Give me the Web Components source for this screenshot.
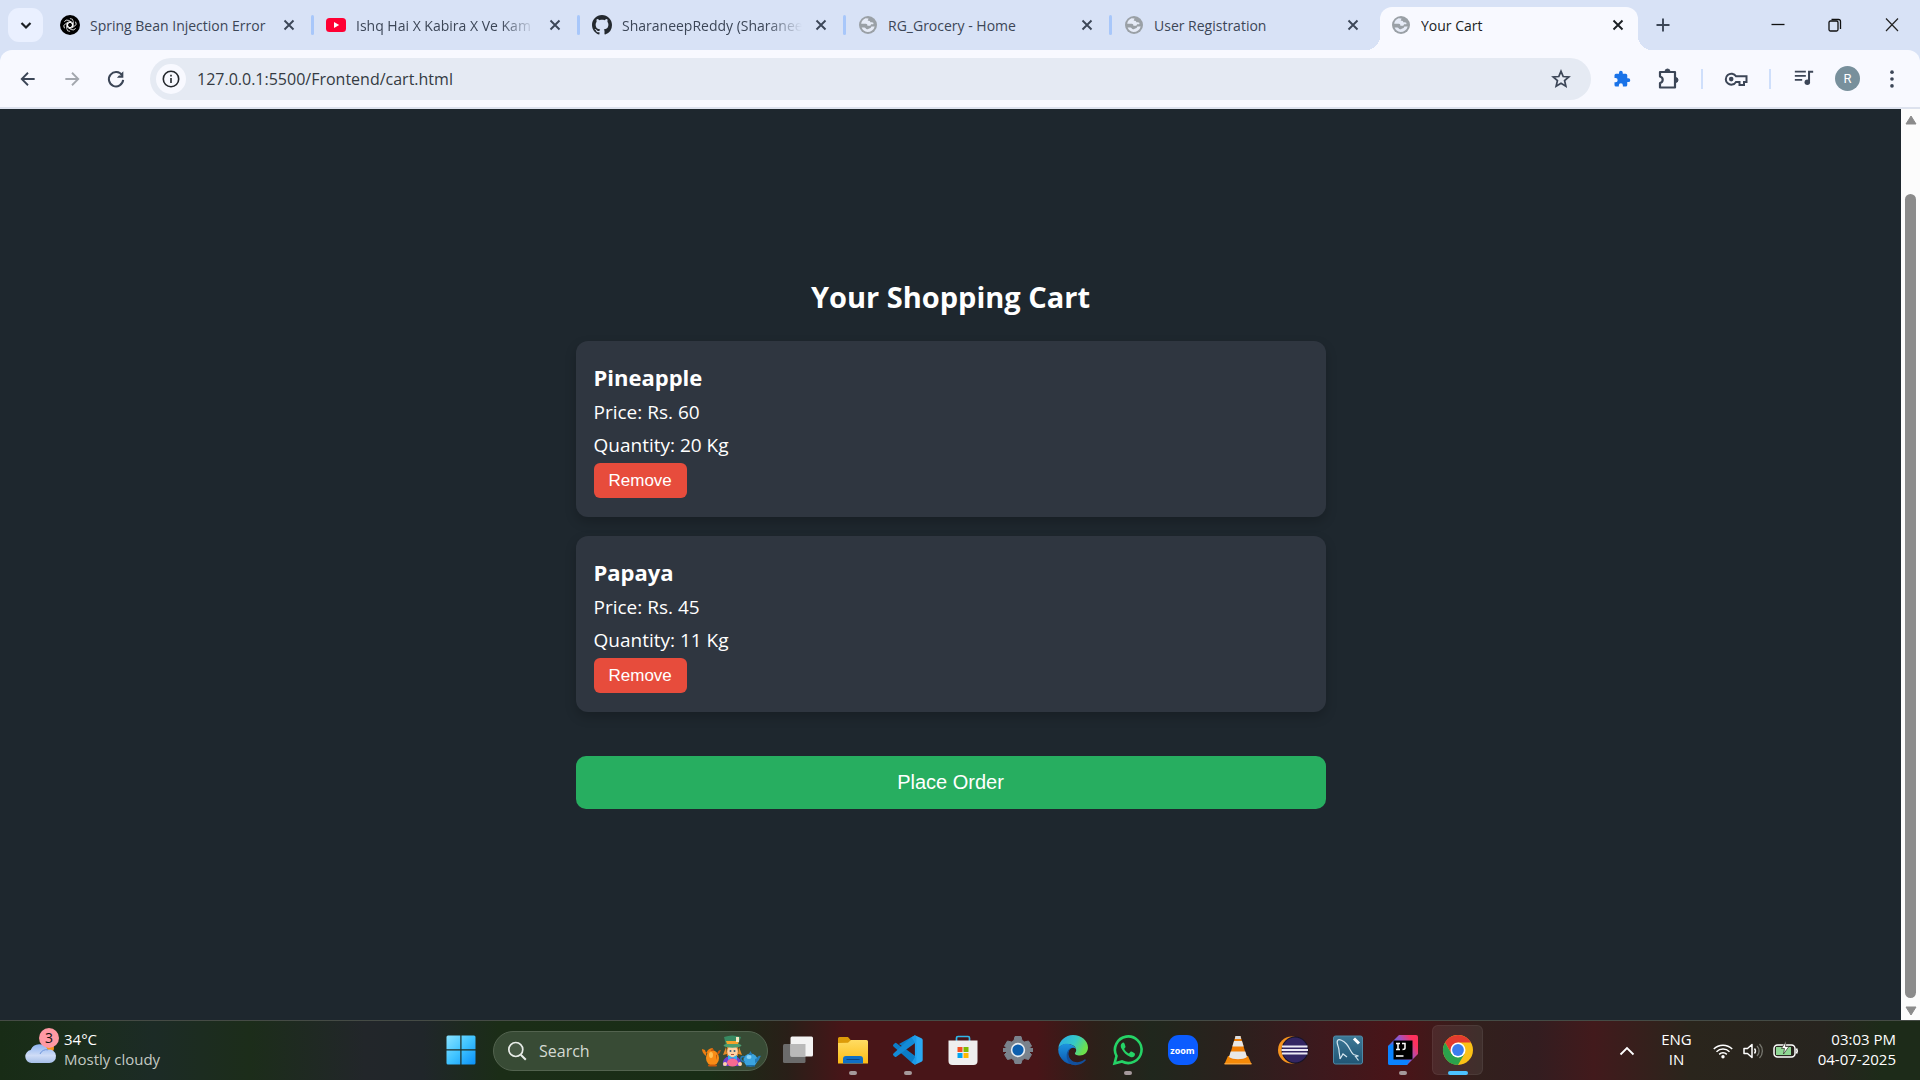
<!DOCTYPE html>
<html lang="en">
<head>
<meta charset="utf-8">
<title>Your Cart</title>
<style>
html,body{height:100%;margin:0}
body{font-family:"Open Sans","Noto Sans",sans-serif;overflow:hidden}
</style>
</head>
<body>
<desktop-screen></desktop-screen>
<script>
const ICONS={
chevron:['0 0 20 20','<path d="M5.500 8l4.500 4.500L14.500 8" fill="none" stroke="#1b1f24" stroke-width="2.200"/>'],
close:['0 0 20 20','<path d="M5.500 5.500l9 9M14.500 5.500l-9 9" stroke="currentColor" stroke-width="1.900" fill="none"/>'],
plus:['0 0 20 20','<path d="M10 3.500v13M3.500 10h13" stroke="#3c4657" stroke-width="1.900"/>'],
gpt:['0 0 20 20','<circle cx="10" cy="10" r="10" fill="#000"/><g fill="none" stroke="#fff" stroke-width=".8"><path d="M9.900 3.600a3.100 3.100 0 0 1 3.400 3v4.300L10 12.800 7 11"/><path d="M9.900 3.600a3.100 3.100 0 0 1 3.400 3v4.300L10 12.800 7 11" transform="rotate(60 10 10)"/><path d="M9.900 3.600a3.100 3.100 0 0 1 3.400 3v4.300L10 12.800 7 11" transform="rotate(120 10 10)"/><path d="M9.900 3.600a3.100 3.100 0 0 1 3.400 3v4.300L10 12.800 7 11" transform="rotate(180 10 10)"/><path d="M9.900 3.600a3.100 3.100 0 0 1 3.400 3v4.300L10 12.800 7 11" transform="rotate(240 10 10)"/><path d="M9.900 3.600a3.100 3.100 0 0 1 3.400 3v4.300L10 12.800 7 11" transform="rotate(300 10 10)"/></g>'],
youtube:['0 0 20 20','<rect y="3" width="20" height="14" rx="3.500" fill="#ff0033"/><path d="M8 7v6l5.200-3z" fill="#fff"/>'],
github:['0 0 16 16','<path fill="#24292f" d="M8 0C3.580 0 0 3.580 0 8c0 3.540 2.290 6.530 5.470 7.590.4.070.55-.17.55-.38 0-.19-.01-.82-.01-1.490-2.010.37-2.530-.49-2.690-.94-.09-.23-.48-.94-.82-1.130-.28-.15-.68-.52-.01-.53.63-.01 1.080.58 1.230.82.72 1.210 1.870.87 2.330.66.07-.52.28-.87.51-1.070-1.780-.2-3.640-.89-3.640-3.950 0-.87.31-1.590.82-2.150-.08-.2-.36-1.020.08-2.120 0 0 .67-.21 2.200.82.64-.18 1.320-.27 2-.27s1.360.09 2 .27c1.530-1.040 2.200-.82 2.200-.82.44 1.100.16 1.920.08 2.120.51.56.82 1.270.82 2.150 0 3.070-1.870 3.750-3.650 3.950.29.25.54.73.54 1.480 0 1.070-.01 1.930-.01 2.200 0 .21.15.46.55.38A8.010 8.010 0 0 0 16 8c0-4.420-3.580-8-8-8z"/>'],
globe:['0 0 20 20','<circle cx="10" cy="10" r="9" fill="#9aa0a6"/><path d="M10.500 3.500L7.500 3.300C5 4.300 3.400 6.500 3.200 8.800h4.600c1.200 0 1.600.8 1.600 1.900h2.200c.9 0 1.400-.7 1.400-1.500h2.300c.6-1.200-.2-1.900-1.400-1.900h-1.600c0-1.300-.8-1.600-2.500-1.600 0-1 .7-1.200.7-2.200zM3.600 12.500c.9 2.500 3 4.300 5.800 4.600 3.600-.1 6.300-2 7.300-5.600h-3.300c-.5 1.300-1 1.900-2.200 1.900-.8 0-1 .8-2 .8-1.600 0-1.500-1.700-2.900-1.700z" fill="#e6ebf7"/>'],
min:['0 0 20 20','<path d="M3.500 9.500h13" stroke="#111" stroke-width="1.300"/>'],
restore:['0 0 20 20','<rect x="4" y="6" width="9" height="10" rx="1.500" fill="none" stroke="#111" stroke-width="1.300"/><path d="M6.500 4.500h7a2 2 0 0 1 2 2V14" fill="none" stroke="#111" stroke-width="1.300"/>'],
winclose:['0 0 20 20','<path d="M4 3.500l12 12.500M16 3.500L4 16" stroke="#222" stroke-width="1.200"/>'],
back:['0 0 24 24','<path d="M20 12H5M12 4.500L4.500 12l7.500 7.500" fill="none" stroke="#3c4657" stroke-width="2.200"/>'],
forward:['0 0 24 24','<path d="M4 12h15M12 4.500l7.500 7.500-7.500 7.500" fill="none" stroke="#a3a7ae" stroke-width="2.200"/>'],
reload:['0 0 24 24','<path d="M18.700 8.200A7.800 7.800 0 1 0 19.800 13" fill="none" stroke="#3c4657" stroke-width="2.200"/><path d="M20 3.500v7h-7l2.200-2.200h2.600V5.700z" fill="#3c4657"/>'],
info:['0 0 20 20','<circle cx="10" cy="10" r="7.700" fill="none" stroke="#24282d" stroke-width="1.600"/><path d="M10 9v5M10 5.800v1.700" stroke="#24282d" stroke-width="1.600"/>'],
star:['0 0 24 24','<path d="M12 3.600l2.400 5.700 6.100.5-4.600 4 1.400 6L12 16.600l-5.300 3.200 1.400-6-4.600-4 6.100-.5z" fill="none" stroke="#3c4657" stroke-width="1.900"/>'],
puzzleBlue:['0 0 24 24','<path fill="#1a73e8" d="M20.500 11H19V7a2 2 0 0 0-2-2h-4V3.500a2.500 2.500 0 0 0-5 0V5H4a2 2 0 0 0-2 2v3.800h1.500a2.700 2.700 0 0 1 0 5.400H2V20a2 2 0 0 0 2 2h3.800v-1.500a2.700 2.700 0 0 1 5.400 0V22H17a2 2 0 0 0 2-2v-4h1.500a2.500 2.500 0 0 0 0-5z"/>'],
puzzle:['0 0 24 24','<path d="M4 5h15v15.500H4V16c3.600-1 3.600-5.500 0-6.500z" fill="none" stroke="#3c4657" stroke-width="2.200" stroke-linejoin="round"/><path d="M9 4.500a2.500 2.500 0 0 1 5 0zM19.500 10.500a2.500 2.500 0 0 1 0 5z" fill="#3c4657" stroke="#3c4657"/>'],
key:['0 0 24 24','<path d="M12 9.300A5.500 5.500 0 1 0 12 15h3.500v3h4.500v-3h2.500V9.300z" fill="none" stroke="#3c4657" stroke-width="2"/><circle cx="7.200" cy="12.100" r="2.300" fill="#3c4657"/>'],
music:['0 0 24 24','<path d="M2 4h12M2 8.500h12M2 13h8" stroke="#3c4657" stroke-width="2"/><path d="M17.500 15V4H22" fill="none" stroke="#3c4657" stroke-width="2.200"/><circle cx="15.600" cy="15.500" r="3" fill="#3c4657"/>'],
dots:['0 0 24 24','<g fill="#3c4657"><circle cx="12" cy="4.500" r="2"/><circle cx="12" cy="12" r="2"/><circle cx="12" cy="19.500" r="2"/></g>'],
up:['0 0 12 10','<path d="M6 1l5 8H1z" fill="#8b8b8b" stroke="#8b8b8b" stroke-linejoin="round"/>'],
down:['0 0 12 10','<path d="M6 9l5-8H1z" fill="#8b8b8b" stroke="#8b8b8b" stroke-linejoin="round"/>'],
cloud:['0 0 32 32','<defs><linearGradient id="c" x1="0" y1="0" x2="0" y2="1"><stop stop-color="#8fb4f2"/><stop offset=".6" stop-color="#cfdcf6"/><stop offset="1" stop-color="#a6bfe8"/></linearGradient></defs><circle cx="24" cy="13" r="6" fill="#f7941d"/><path d="M7.500 28a6.500 6.500 0 0 1-.8-12.900 9.200 9.200 0 0 1 17-.3A6.700 6.700 0 1 1 25 28z" fill="url(#c)"/><path d="M16 19a7 7 0 0 1 8-4.200" fill="none" stroke="#6f97dc" stroke-width="1"/>'],
windows:['0 0 30 30','<defs><linearGradient id="w" x1="0" y1="0" x2="1" y2="1"><stop stop-color="#8ae3ff"/><stop offset=".5" stop-color="#3fc3ff"/><stop offset="1" stop-color="#0a90f8"/></linearGradient></defs><path d="M2 .5h12.300v13.800H.5V2A1.500 1.500 0 0 1 2 .5zM15.500.5H28A1.500 1.500 0 0 1 29.500 2v12.300h-14zM.5 15.500h13.800v14H2A1.500 1.500 0 0 1 .5 28zM15.500 15.500h14V28a1.500 1.500 0 0 1-1.500 1.500H15.500z" fill="url(#w)"/>'],
search:['0 0 20 20','<circle cx="8.800" cy="8.500" r="7" fill="rgba(255,255,255,.08)" stroke="#e8ece8" stroke-width="1.700"/><path d="M13.800 13.700l5 5" stroke="#e8ece8" stroke-width="2"/>'],
hatter:['0 0 56 32','<path d="M9 13c-5 0-7 4-7 8-3-2-4-5-4-7l3 1c1 5 5 3 5 6z" fill="#ee7d11"/><ellipse cx="8.500" cy="23" rx="6.500" ry="7.500" fill="#f88c16"/><path d="M8.500 13l2 3h-4zM12 20c5-1 4-4 5-5-5 0-3 6-5 10z" fill="#c75a0c"/><ellipse cx="7" cy="20" rx="2" ry="3" fill="#ffc052"/><rect x="4" y="29.500" width="9" height="2" rx="1" fill="#c75a0c"/><path d="M19 31c-1-7 3-10 9-10s10 3 9 10z" fill="#6d3fd0"/><path d="M23 11h11v10H23z" fill="#d8761c"/><ellipse cx="28.500" cy="16.500" rx="5.300" ry="6" fill="#ffd3a5"/><path d="M22 12l-3 8 4-1zM35 12l3 8-4-1z" fill="#e88b28"/><circle cx="26.500" cy="16" r="1" fill="#34607a"/><circle cx="30.500" cy="16" r="1" fill="#34607a"/><path d="M27 19.500h3" stroke="#b0503a"/><path d="M20 2q8-3 17 0l-3 8H22z" fill="#388a62"/><ellipse cx="28.500" cy="10.500" rx="9" ry="2.200" fill="#4d9d70"/><path d="M22 6h13l-1 3H23z" fill="#f5a22a"/><path d="M32 2h3v5h-3z" fill="#f4e8c1"/><path d="M24 20l4.500 2.500L33 20v5l-4.500-2L24 25z" fill="#35b2ee"/><ellipse cx="28.500" cy="27.500" rx="5.500" ry="4" fill="#f66a91"/><circle cx="21" cy="29" r="2" fill="#ffd3a5"/><circle cx="36" cy="29" r="2" fill="#ffd3a5"/><ellipse cx="46.500" cy="25" rx="7" ry="6.500" fill="#3ba4df"/><path d="M46.500 16l2 4h-4zM51 24c3 0 2-4 6-3-2 2-1 5-6 7z" fill="#237cb9"/><path d="M41 22c-5-2-6 4 0 5" fill="none" stroke="#237cb9" stroke-width="1.500"/><ellipse cx="45" cy="22" rx="2.500" ry="2" fill="#88d2f4"/><rect x="42" y="30" width="9" height="1.500" fill="#1d6da8"/>'],
taskview:['0 0 30 30','<rect y="9" width="22.500" height="19" rx="1.500" fill="#6b6b6b"/><rect x="7.500" y="1.500" width="22.500" height="20" rx="1.500" fill="#f3f3f3"/><path d="M7.500 9h15v12.500h-15z" fill="#b9b9b9"/>'],
folder:['0 0 30 30','<path d="M0 3.500A1.500 1.500 0 0 1 1.500 2H10l3 3.500V10H0z" fill="#dd9b09"/><defs><linearGradient id="f" x1="0" y1="0" x2="0" y2="1"><stop stop-color="#ffdc63"/><stop offset="1" stop-color="#fcbc15"/></linearGradient></defs><path d="M0 8l10-.3L13 5h15.500A1.500 1.500 0 0 1 30 6.500V28.500H0z" fill="url(#f)"/><path d="M5 28.500V24a3 3 0 0 1 3-3h14a3 3 0 0 1 3 3v4.500z" fill="#0f6fc5"/><path d="M8.500 24.500h13" stroke="#0a4584" stroke-width="1"/>'],
vscode:['0 0 100 100','<path d="M73 1L29.500 41 11 27a4 4 0 0 0-5 .3L1.500 32a4 4 0 0 0 0 6L62 92l11 7 2-28L20 30z" fill="#0b7dc8"/><path d="M1.500 62a4 4 0 0 0 0 6L6 72.500a4 4 0 0 0 5 .3L75 26 73 1 60 8z" fill="#138bd6"/><path d="M73 99V1l22 10a7 7 0 0 1 4 6v66a7 7 0 0 1-4 6z" fill="#2aa9f3"/><path d="M62 92l13-20V28L62 8l11-7 5 5v88l-5 5z" fill="#1c9be8"/>'],
store:['0 0 30 30','<path d="M8.500 7V3A1.500 1.500 0 0 1 10 1.500h10A1.500 1.500 0 0 1 21.500 3v4" fill="none" stroke="#31b8e9" stroke-width="1.700"/><path d="M.5 5.500h29V26a4 4 0 0 1-4 4h-21a4 4 0 0 1-4-4z" fill="#efefef"/><path d="M9.500 12h5v5h-5z" fill="#f25022"/><path d="M15.500 12h5v5h-5z" fill="#7fba00"/><path d="M9.500 18h5v5h-5z" fill="#00a4ef"/><path d="M15.500 18h5v5h-5z" fill="#ffb900"/>'],
settings:['0 0 30 30','<path d="M12 1.500h6l1 4 2.500 1.400L25.500 6l3 5-3 3v2.500l3 3-3 5-4-1L19 25l-1 3.500h-6L11 25l-2.500-1.500-4 1-3-5 3-3V14l-3-3 3-5 4 1L11 5.500z" fill="#7a828c" stroke="#7a828c" stroke-linejoin="round"/><path d="M0 13h30v4H0z" fill="#7a828c"/><circle cx="15" cy="15" r="7.200" fill="#e8edf2"/><circle cx="15" cy="15" r="5.600" fill="#0d5fae"/>'],
edge:['0 0 30 30','<defs><linearGradient id="e1" x1="0" x2="1" y1="0" y2=".4"><stop stop-color="#28a8ea"/><stop offset=".6" stop-color="#36c9c6"/><stop offset="1" stop-color="#6de04c"/></linearGradient><linearGradient id="e2" x1="0" x2="0" y1="0" y2="1"><stop stop-color="#1c94e0"/><stop offset="1" stop-color="#0d56ad"/></linearGradient></defs><path d="M.3 13C1.500 5.500 7.500 0 15 0c8.500 0 15 6 15 12.500 0 5-4 8-8 8-4 0-5.500-1.500-5-2.500 1.300-1.200 1.500-3 .8-4.500C16 8.500 5 7 .3 13z" fill="url(#e1)"/><path d="M.2 14C2 9.500 7 8 11 9c4 .8 6.500 3 7 5-4-3.500-9 1-7.500 7 1.200 4.500 5 7.500 10 7.500A15 15 0 0 1 .2 14z" fill="url(#e2)"/><path d="M14 12.500c-3.500 2-4.500 6-3 9.500 2 5 9 7.500 15.500 2.500a.8.800 0 0 1 1.200 1C24 29.500 19 31 14 29.700 7.500 27 6.500 15 14 12.500z" fill="#124f9c"/>'],
whatsapp:['0 0 30 30','<path d="M1.500 28.500l2-7.500A13.300 13.300 0 1 1 9 26.500z" fill="none" stroke="#25d366" stroke-width="2.600"/><path d="M10 7.500c-2 1-3 3-1.500 6 2 4 5 7 9 8.500 3 .8 4.500-.8 4.500-3 0-.8-3.200-2.400-4-2.400s-1.500 2-2.300 1.800c-2-.8-3.700-2.500-4.500-4.300 0-.7 1.300-1.500 1.300-2.400 0-.7-1-3.400-1.500-4z" fill="#25d366"/>'],
vlc:['0 0 30 30','<path d="M5 21h20l3.500 8h-27z" fill="#f58a08"/><path d="M12.500 1h5L24 23c-3 3-15 3-18 0z" fill="#f07e05"/><path d="M11 6h8l1.700 5.500H9.300zM7.700 16.500h14.600L24 22c-4 3-14 3-18 0z" fill="#e8e8e8"/><path d="M12.500 1h5l.7 3h-6.400z" fill="#d9dce0"/><path d="M1.500 28h27v1.500h-27z" fill="#f8a33a"/>'],
eclipse:['0 0 30 30','<circle cx="13.500" cy="15" r="13.500" fill="#f7941e"/><circle cx="17" cy="15" r="13.500" fill="#171528"/><circle cx="17" cy="15" r="12.500" fill="#332663"/><path d="M4 10.500h25.500v2H4zM3.500 14h26.500v2H3.500zM4 17.500h25.500v2H4z" fill="#eceaf5"/>'],
mysql:['0 0 30 30','<defs><linearGradient id="m" x1="0" x2="0" y1="0" y2="1"><stop stop-color="#3d7997"/><stop offset="1" stop-color="#205574"/></linearGradient></defs><rect x=".5" y="1" width="29" height="28" rx="2" fill="url(#m)" stroke="#4e89a6"/><path d="M7 24c0-4-1-5-1-9 0-3-3-7-1.500-9.500 1.500-2 6 0 9 3.500 3.500 4 4 8.500 7 10.500l5 1.500-3 .5 3 4M7 24l3-5 4 3" fill="none" stroke="#d6e6ef" stroke-width="1.200"/><path d="M21 3.500l5 5" stroke="#fff" stroke-width="3"/>'],
idea:['0 0 30 30','<defs><linearGradient id="i" x1="0" x2="1" y1=".6" y2="0"><stop stop-color="#087cfa"/><stop offset=".5" stop-color="#9a55c8"/><stop offset=".8" stop-color="#fe315d"/></linearGradient></defs><path d="M0 11L11 0h17a2 2 0 0 1 2 2v17L19 30H2a2 2 0 0 1-2-2z" fill="url(#i)"/><path d="M0 11l6-2v16h16l-3 5H2a2 2 0 0 1-2-2z" fill="#0a83ff"/><path d="M5.500 5.500h19v19h-19z" fill="#000"/><path d="M8 8.500h4M10 8.500v6M8 14.500h4M14 8.500h3v4.500q0 1.500-2.500 1.500M8 21h7.500" fill="none" stroke="#fff" stroke-width="1.500"/>'],
chrome:['0 0 30 30','<circle cx="15" cy="15" r="15" fill="#fbc116"/><path d="M15 7.500h13A15 15 0 0 0 2 7.500l6.500 11z" fill="#e33b2e"/><path d="M2 7.500A15 15 0 0 0 15 30l6.500-11.300L15 22.500l-6.500-3.800z" fill="#2ba24c"/><circle cx="15" cy="15" r="7.500" fill="#fff"/><circle cx="15" cy="15" r="5.900" fill="#3b7ded"/>'],
caret:['0 0 16 16','<path d="M1.500 11.500L8 5l6.500 6.500" fill="none" stroke="#fff" stroke-width="1.800"/>'],
wifi:['0 0 20 20','<g fill="none" stroke="#fff" stroke-width="1.500"><path d="M.8 8a13 13 0 0 1 18.400 0M3.500 10.800a9.200 9.200 0 0 1 13 0M6.200 13.400a5.400 5.400 0 0 1 7.600 0"/></g><circle cx="10" cy="15.800" r="1.700" fill="#fff"/>'],
volume:['0 0 20 20','<path d="M1 7.500h3.500L9 3.500v13l-4.500-4H1z" fill="none" stroke="#fff" stroke-width="1.500" stroke-linejoin="round"/><path d="M11.500 7.500a4 4 0 0 1 0 5" fill="none" stroke="#fff" stroke-width="1.400"/><path d="M14 5a7 7 0 0 1 0 10M16.500 3a10 10 0 0 1 0 14" fill="none" stroke="#77776f" stroke-width="1.300"/>'],
battery:['0 0 26 20','<rect x="1" y="4" width="21" height="12" rx="3.500" fill="none" stroke="#fff" stroke-width="1.500"/><path d="M3 6h15v8H3z" fill="#8fd694"/><path d="M23.500 7.500q1.500 2.500 0 5" stroke="#fff" stroke-width="1.600" fill="none"/><path d="M13 0L8.500 7.500h3L10.500 13l5.500-7.500h-3.500z" fill="#fff" stroke="#2a281f" stroke-width=".7"/>']
};
function define(name,markup){
  customElements.define(name,class extends HTMLElement{
    connectedCallback(){
      if(this.shadowRoot)return;
      const root=this.attachShadow({mode:'open'});
      root.innerHTML='<style>*{box-sizing:border-box}button,input{font:inherit;color:inherit;background:none;border:0;padding:0;margin:0;outline:0}</style>'+(typeof markup==='function'?markup(this):markup);
    }
  });
}
const attr=(el,n,d='')=>el.getAttribute(n)??d;

define('ui-icon',el=>{
  const [box,art]=ICONS[attr(el,'name')];
  const w=attr(el,'width','20'),h=attr(el,'height',w);
  return `<style>:host{display:block;flex:none;width:${w}px;height:${h}px}svg{display:block;width:100%;height:100%;overflow:visible}</style><svg viewBox="${box}" aria-hidden="true">${art}</svg>`;
});

define('icon-button',el=>`<style>:host{display:block;flex:none}button{display:flex;align-items:center;justify-content:center;width:var(--w,44px);height:var(--h,40px);border-radius:var(--r,0);background:var(--bg,none)}</style>
<button type="button" aria-label="${attr(el,'label')}"><slot></slot></button>`);

define('browser-tab',el=>`<style>
:host{display:flex;box-sizing:border-box;flex:0 1 266px;min-width:60px;align-items:center;height:34px;margin-bottom:8px;padding:0 13px 0 14px;position:relative;color:#3c4657;font-size:14px}
:host(:not([plain]):not([active]))::after{content:"";position:absolute;right:-2px;top:7px;width:3px;height:20px;border-radius:2px;background:#a8c7fa}
:host([active]){flex-basis:258px;height:43px;margin:0 0 0 4px;padding:0 10px 7px 11px;background:#f8f9ff;border-radius:12px 12px 0 0;color:#1b1f24}
:host([active])::before,:host([active])::after{content:"";position:absolute;bottom:0;width:14px;height:14px}
:host([active])::before{left:-14px;background:radial-gradient(circle at 0 0,transparent 14px,#f8f9ff 14px)}
:host([active])::after{right:-14px;background:radial-gradient(circle at 100% 0,transparent 14px,#f8f9ff 14px)}
.title{flex:1;min-width:0;margin:0 0 0 10px;height:24px;text-align:left;overflow:hidden;white-space:nowrap}
:host([fade]) .title{mask-image:linear-gradient(90deg,#000 80%,transparent)}
.x{display:flex;width:20px;height:20px;margin-left:9px}
</style>
<ui-icon name="${attr(el,'icon')}"></ui-icon><button class="title" type="button"><slot></slot></button><button class="x" type="button" aria-label="Close tab"><ui-icon name="close"></ui-icon></button>`);

define('tab-strip',`<style>
:host{display:flex;align-items:flex-end;height:50px;background:#d8e2f6}
.tabs{display:flex;align-items:flex-end;flex:0 1 1592px;min-width:0;margin-left:3px}
.find{--w:35px;--h:34px;--r:11px;--bg:#eaf0ff;margin:0 0 8px 8px}
.new{--w:34px;--h:34px;margin:0 0 8px 8px}
.win{display:flex;margin-left:auto;align-self:flex-start;--w:57px;--h:50px}
</style>
<icon-button class="find" label="Search tabs"><ui-icon name="chevron"></ui-icon></icon-button>
<div class="tabs">
<browser-tab icon="gpt">Spring Bean Injection Error</browser-tab>
<browser-tab icon="youtube" fade>Ishq Hai X Kabira X Ve Kam</browser-tab>
<browser-tab icon="github" fade>SharaneepReddy (Sharanee</browser-tab>
<browser-tab icon="globe">RG_Grocery - Home</browser-tab>
<browser-tab icon="globe" plain>User Registration</browser-tab>
<browser-tab icon="globe" active>Your Cart</browser-tab>
</div>
<icon-button class="new" label="New tab"><ui-icon name="plus"></ui-icon></icon-button>
<div class="win">
<icon-button label="Minimize"><ui-icon name="min"></ui-icon></icon-button>
<icon-button label="Restore"><ui-icon name="restore"></ui-icon></icon-button>
<icon-button label="Close"><ui-icon name="winclose"></ui-icon></icon-button>
</div>`);

define('tool-bar',`<style>
:host{display:block;background:#d8e2f6}
.bar{display:flex;align-items:center;height:59px;background:#f8f9ff;border-bottom:2px solid #dde2ee;border-radius:12px 12px 0 0;padding:0 6px}
form{display:flex;flex:1;align-items:center;height:42px;margin:0 8px 0 12px;border-radius:21px;background:#e5eaf3;padding:0 8px 0 6px}
.info{--w:30px;--h:30px;--r:15px;--bg:#f8f9ff}
input{flex:1;min-width:0;margin-left:11px;font-size:16px;color:#343a42}
.star{--w:44px}
.sep{width:2px;height:20px;background:#cfdffb;margin:0 10px}
.avatar{display:flex;align-items:center;justify-content:center;width:25px;height:25px;margin:0 10px 0 8px;border-radius:50%;background:#78909c;color:#fff;font:13px Roboto,sans-serif}
.b{--w:46px}
</style>
<div class="bar">
<icon-button label="Back"><ui-icon name="back"></ui-icon></icon-button>
<icon-button label="Forward"><ui-icon name="forward"></ui-icon></icon-button>
<icon-button label="Reload"><ui-icon name="reload" width="22"></ui-icon></icon-button>
<form><icon-button class="info" label="Site information"><ui-icon name="info" width="20"></ui-icon></icon-button>
<input type="text" aria-label="Address" value="127.0.0.1:5500/Frontend/cart.html">
<icon-button class="star" label="Bookmark"><ui-icon name="star" width="22"></ui-icon></icon-button></form>
<icon-button class="b" label="Extension"><ui-icon name="puzzleBlue" width="18"></ui-icon></icon-button>
<icon-button class="b" label="Extensions"><ui-icon name="puzzle" width="24"></ui-icon></icon-button>
<span class="sep"></span>
<icon-button class="b" label="Passwords"><ui-icon name="key" width="24"></ui-icon></icon-button>
<span class="sep"></span>
<icon-button class="b" label="Media"><ui-icon name="music" width="22"></ui-icon></icon-button>
<button class="avatar" type="button">R</button>
<icon-button label="Menu"><ui-icon name="dots" width="22"></ui-icon></icon-button>
</div>`);

define('cart-item',el=>`<style>
:host{display:block;padding:18px 18px 19px;border-radius:12px;background:#2f3640;box-shadow:0 5px 12px rgba(0,0,0,.2)}
h3,p{margin:0;font-size:19px;line-height:33px;font-weight:400}
h3{font-size:22px;line-height:37px;font-weight:700}
button{display:block;height:35px;margin-top:1px;padding:0 15px;border-radius:6px;background:#e74c3c;font:17px "Liberation Sans",sans-serif;color:#fff}
</style>
<h3>${attr(el,'name')}</h3><p>Price: Rs. ${attr(el,'price')}</p><p>Quantity: ${attr(el,'quantity')} Kg</p><button type="button">Remove</button>`);

define('shopping-cart',`<style>
:host{display:block;width:100%;max-width:750px;margin:0 auto;color:#fff}
h2{margin:0 0 23px;font-size:29px;line-height:42px;text-align:center}
.list{display:flex;flex-direction:column;gap:19px}
.order{display:block;width:100%;height:53px;margin-top:44px;border-radius:10px;background:#27ae60;font:20px "Liberation Sans",sans-serif;color:#fff}
</style>
<h2>Your Shopping Cart</h2>
<div class="list">
<cart-item name="Pineapple" price="60" quantity="20"></cart-item>
<cart-item name="Papaya" price="45" quantity="11"></cart-item>
</div>
<button class="order" type="button">Place Order</button>`);

define('scroll-track',`<style>
:host{display:flex;flex-direction:column;align-items:center;width:19px;background:#fcfcfc;padding:6px 0 4px}
.track{flex:1;display:flex;padding:69px 0 8px}
.thumb{width:11px;border-radius:6px;background:#8b8b8b}
</style>
<ui-icon name="up" width="12" height="10"></ui-icon><div class="track"><div class="thumb"></div></div><ui-icon name="down" width="12" height="10"></ui-icon>`);

define('task-app',el=>`<style>
:host{display:block;flex:none}
button{display:flex;flex-direction:column;align-items:center;width:55px;height:59px;padding-top:14px;position:relative}
:host([active]) button::before{content:"";position:absolute;inset:4px 2px 5px;border-radius:6px;background:rgba(255,255,255,.07);border:1px solid rgba(255,255,255,.06)}
ui-icon{position:relative}
i{position:relative;width:8px;height:4px;margin-top:6px;border-radius:2px;background:#a5999b}
:host([active]) i{width:20px;background:#4cc2ff}
.zoom{display:flex;align-items:center;justify-content:center;width:30px;height:30px;border-radius:11px;background:#0b5cff;color:#fff;font:700 9px "Open Sans",sans-serif}
</style>
<button type="button" aria-label="${attr(el,'label')}">${el.hasAttribute('icon')?`<ui-icon name="${attr(el,'icon')}" width="30"></ui-icon>`:'<span class="zoom"><slot></slot></span>'}${el.hasAttribute('open')?'<i></i>':''}</button>`);

define('task-bar',`<style>
:host{display:grid;box-sizing:border-box;grid-template-columns:1fr auto 1fr;align-items:center;height:60px;padding-right:2px;border-top:1px solid #454b45;color:#fff;font-size:15px;line-height:20px;
background:linear-gradient(90deg,#182c16 0,#1b2d1c 4%,#1c2b26 8%,#1c2d1a 13%,#22262a 19%,#20262a 22%,#1b2d17 26%,#192d16 37%,#291f18 41%,#481518 44%,#481518 54%,#2c2019 57%,#20271d 60%,#2a211d 64%,#3a1a1e 68%,#4a1418 73%,#32201d 77%,#331d20 80%,#421a1c 83%,#2a251c 88%,#27241f 95%,#1d2b19 98%)}
.weather{display:flex;align-items:center;gap:8px;padding-left:24px}
.weather p{margin:0}
.weather .text,.lang,.clock{padding-bottom:4px}
.weather .sub{color:#c3c9c3}
.pic{position:relative}
.badge{position:absolute;left:15px;top:-7px;width:20px;height:20px;border-radius:50%;background:#ff99a4;color:#111;font-size:14px;text-align:center}
.apps{display:flex;align-items:center}
label{display:flex;align-items:center;width:275px;height:40px;margin:0 2px 0 5px;padding:0 7px 0 13px;border-radius:20px;border:1px solid #53634f;background:#384b35}
input{flex:1;min-width:0;margin:0 14px 0 12px;font-size:16px}
input::placeholder{color:#d4dad3;opacity:1}
.tray{display:flex;align-items:center;justify-content:flex-end;padding-right:22px;gap:10px}
.lang,.clock{text-align:center;margin:0}
.clock{text-align:right;margin-left:9px;white-space:nowrap}
.lang{margin:0 11px 0 16px}
</style>
<div class="weather"><div class="pic"><ui-icon name="cloud" width="32"></ui-icon><span class="badge">3</span></div><div class="text"><p>34°C</p><p class="sub">Mostly cloudy</p></div></div>
<div class="apps">
<task-app icon="windows" label="Start"></task-app>
<label><ui-icon name="search" width="20"></ui-icon><input type="search" placeholder="Search" aria-label="Search"><ui-icon name="hatter" width="56" height="32"></ui-icon></label>
<task-app icon="taskview" label="Task view"></task-app>
<task-app icon="folder" label="File Explorer" open></task-app>
<task-app icon="vscode" label="Code" open></task-app>
<task-app icon="store" label="Store"></task-app>
<task-app icon="settings" label="Settings"></task-app>
<task-app icon="edge" label="Edge"></task-app>
<task-app icon="whatsapp" label="WhatsApp" open></task-app>
<task-app label="Zoom">zoom</task-app>
<task-app icon="vlc" label="VLC"></task-app>
<task-app icon="eclipse" label="Eclipse"></task-app>
<task-app icon="mysql" label="MySQL Workbench"></task-app>
<task-app icon="idea" label="IntelliJ IDEA" open></task-app>
<task-app icon="chrome" label="Chrome" open active></task-app>
</div>
<div class="tray"><ui-icon name="caret" width="16"></ui-icon><p class="lang">ENG<br>IN</p><ui-icon name="wifi"></ui-icon><ui-icon name="volume"></ui-icon><ui-icon name="battery" width="26" height="20"></ui-icon><p class="clock">03:03 PM<br>04-07-2025</p></div>`);

define('desktop-screen',`<style>
:host{display:flex;flex-direction:column;height:100vh}
.view{flex:1;min-height:0;display:flex;background:#1e272e}
main{flex:1;padding-top:167px;min-width:0;overflow:hidden}
</style>
<tab-strip></tab-strip><tool-bar></tool-bar>
<div class="view"><main><shopping-cart></shopping-cart></main><scroll-track></scroll-track></div>
<task-bar></task-bar>`);
</script>
</body>
</html>
